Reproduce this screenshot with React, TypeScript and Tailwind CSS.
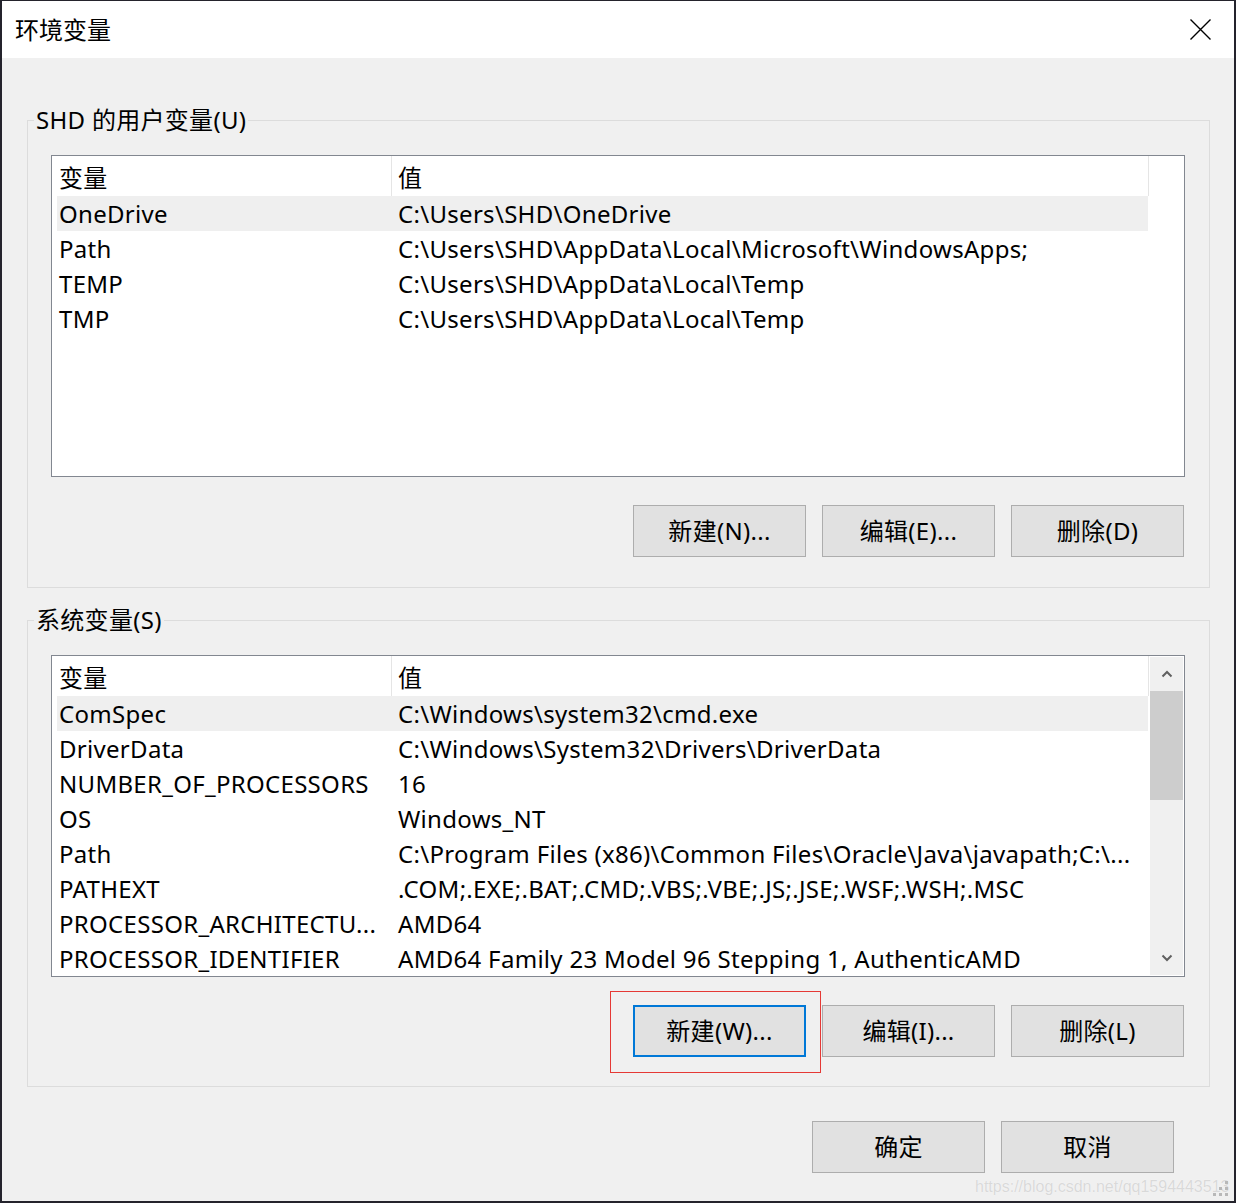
import React from "react";

const F = "font-['Noto_Sans','Noto_Sans_CJK_SC',sans-serif]";

type Row = [string, string];

const userRows: Row[] = [
  ["OneDrive", "C:\\Users\\SHD\\OneDrive"],
  ["Path", "C:\\Users\\SHD\\AppData\\Local\\Microsoft\\WindowsApps;"],
  ["TEMP", "C:\\Users\\SHD\\AppData\\Local\\Temp"],
  ["TMP", "C:\\Users\\SHD\\AppData\\Local\\Temp"],
];

const sysRows: Row[] = [
  ["ComSpec", "C:\\Windows\\system32\\cmd.exe"],
  ["DriverData", "C:\\Windows\\System32\\Drivers\\DriverData"],
  ["NUMBER_OF_PROCESSORS", "16"],
  ["OS", "Windows_NT"],
  ["Path", "C:\\Program Files (x86)\\Common Files\\Oracle\\Java\\javapath;C:\\..."],
  ["PATHEXT", ".COM;.EXE;.BAT;.CMD;.VBS;.VBE;.JS;.JSE;.WSF;.WSH;.MSC"],
  ["PROCESSOR_ARCHITECTU...", "AMD64"],
  ["PROCESSOR_IDENTIFIER", "AMD64 Family 23 Model 96 Stepping 1, AuthenticAMD"],
];

function ListBox({ rows, scroll }: { rows: Row[]; scroll?: boolean }) {
  return (
    <div className="h-[322px] bg-white border border-[#828790] flex">
      <div className="flex-1 pl-[5px] overflow-hidden">
        <div className="w-[1092px] h-[40px] flex items-stretch border-r border-[#e5e5e5]">
          <div className="w-[335px] pl-[2px] border-r border-[#e5e5e5] flex items-center pt-[3px]">变量</div>
          <div className="pl-[6px] flex items-center pt-[3px]">值</div>
        </div>
        {rows.map((r, i) => (
          <div
            key={i}
            className={`w-[1091px] h-[35px] flex items-center whitespace-nowrap ${i === 0 ? "bg-[#efefef]" : ""}`}
          >
            <div className="w-[335px] pl-[2px] pt-[1px] overflow-hidden">{r[0]}</div>
            <div className="pl-[6px] pt-[1px]">{r[1]}</div>
          </div>
        ))}
      </div>
      {scroll && (
        <div className="w-[35px] p-[1px] flex">
          <div className="flex-1 bg-[#f0f0f0] flex flex-col">
            <div className="h-[34px] flex items-center justify-center">
              <svg width="12" height="8" viewBox="0 0 12 8">
                <path d="M1.5 6.5 L6 2 L10.5 6.5" fill="none" stroke="#606060" strokeWidth="2" />
              </svg>
            </div>
            <div className="h-[109px] bg-[#cdcdcd]" />
            <div className="flex-1" />
            <div className="h-[34px] flex items-center justify-center">
              <svg width="12" height="8" viewBox="0 0 12 8">
                <path d="M1.5 1.5 L6 6 L10.5 1.5" fill="none" stroke="#606060" strokeWidth="2" />
              </svg>
            </div>
          </div>
        </div>
      )}
    </div>
  );
}

function Btn({ children, focused }: { children: React.ReactNode; focused?: boolean }) {
  return (
    <button
      className={`w-[173px] h-[52px] bg-[#e1e1e1] text-[24px] text-black flex items-center justify-center ${
        focused ? "border-2 border-[#0078d7]" : "border border-[#adadad]"
      }`}
    >
      {children}
    </button>
  );
}

function Group({
  title,
  rows,
  scroll,
  buttons,
  pb,
}: {
  title: string;
  rows: Row[];
  scroll?: boolean;
  buttons: React.ReactNode;
  pb: string;
}) {
  return (
    <fieldset className="border border-[#dcdcdc] p-0 m-0 min-w-0">
      <legend className="ml-[6px] px-[2px] text-[24px] leading-[32px] text-black">{title}</legend>
      <div className={`pl-[23px] pr-[24px] pt-[19px] ${pb}`}>
        <ListBox rows={rows} scroll={scroll} />
        <div className="mt-[28px] flex justify-end gap-[16px] pr-[1px]">{buttons}</div>
      </div>
    </fieldset>
  );
}

export default function App() {
  return (
    <div className={`relative w-[1236px] h-[1203px] bg-[#24232c] overflow-hidden ${F} text-[24px] tracking-[0.3px] text-black`}>
      <div className="ml-[2px] mt-[1px] w-[1232px] h-[1200px] flex flex-col bg-[#f0f0f0]">
        <div className="h-[57px] bg-white flex items-center justify-between pl-[13px] pr-[23px]">
          <span className="text-[24px] leading-none tracking-normal">环境变量</span>
          <svg width="21" height="21" viewBox="0 0 21 21">
            <path d="M0.5 0.5 L20.5 20.5 M20.5 0.5 L0.5 20.5" stroke="#000" strokeWidth="1.4" />
          </svg>
        </div>
        <div className="flex-1 pl-[25px] pr-[24px] pt-[46px]">
          <Group
            title="SHD 的用户变量(U)"
            rows={userRows}
            pb="pb-[30px]"
            buttons={
              <>
                <Btn>新建(N)...</Btn>
                <Btn>编辑(E)...</Btn>
                <Btn>删除(D)</Btn>
              </>
            }
          />
          <div className="mt-[16px]">
            <Group
              title="系统变量(S)"
              rows={sysRows}
              scroll
              pb="pb-[29px]"
              buttons={
                <>
                  <div className="relative">
                    <Btn focused>新建(W)...</Btn>
                    <div className="absolute left-[-23px] right-[-15px] top-[-14px] bottom-[-16px] border border-[#e53935] pointer-events-none" />
                  </div>
                  <Btn>编辑(I)...</Btn>
                  <Btn>删除(L)</Btn>
                </>
              }
            />
          </div>
          <div className="mt-[34px] flex justify-end gap-[16px] pr-[36px]">
            <Btn>确定</Btn>
            <Btn>取消</Btn>
          </div>
        </div>
      </div>
      <div className="absolute left-[975px] top-[1175px] font-['Liberation_Sans',sans-serif] text-[16px] tracking-normal text-[#d9d9d9] [text-shadow:0_0_1px_#ffffff] whitespace-nowrap">
        https://blog.csdn.net/qq1594443513
      </div>
      <svg className="absolute left-[1213px] top-[1180px]" width="18" height="18" viewBox="0 0 18 18">
        <g fill="#b8b8b8">
          <rect x="12" y="1" width="3" height="3" />
          <rect x="12" y="7" width="3" height="3" />
          <rect x="6" y="7" width="3" height="3" />
          <rect x="0" y="13" width="3" height="3" />
          <rect x="6" y="13" width="3" height="3" />
          <rect x="12" y="13" width="3" height="3" />
        </g>
      </svg>
    </div>
  );
}
